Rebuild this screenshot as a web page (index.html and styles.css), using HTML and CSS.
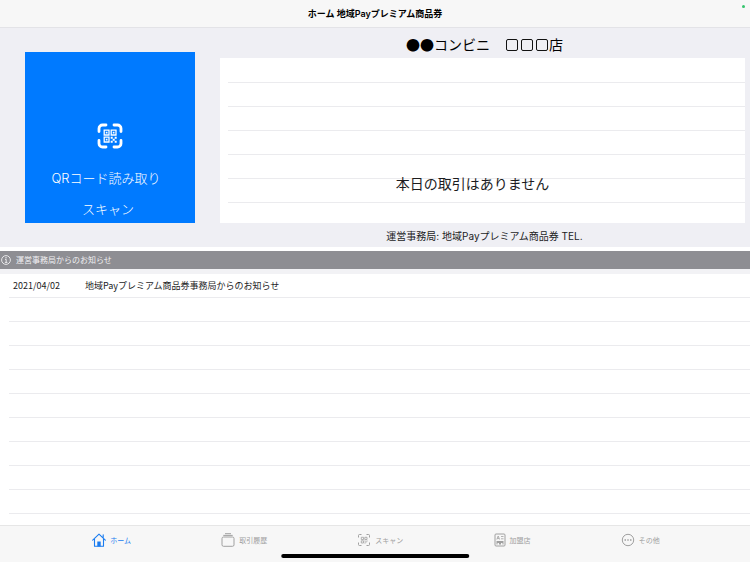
FILE: index.html
```html
<!DOCTYPE html>
<html lang="ja">
<head>
<meta charset="utf-8">
<meta name="viewport" content="width=device-width, initial-scale=1">
<title>ホーム 地域Payプレミアム商品券</title>
<link rel="stylesheet" href="styles.css">
</head>
<body>
<header class="navbar">
  <h1 class="navbar-title">ホーム 地域Payプレミアム商品券</h1>
  <span class="status-dot"></span>
</header>

<main class="content">
  <section class="summary">
    <button class="scan-button" type="button">
      <svg class="scan-icon" viewBox="0 0 26 26" fill="none" stroke="currentColor">
        <path d="M2 8.500V5.500A3.500 3.500 0 0 1 5.500 2H9M17 2h3.500A3.500 3.500 0 0 1 24 5.500v3M24 17.500v3a3.500 3.500 0 0 1-3.500 3.500H17M9 24H5.500A3.500 3.500 0 0 1 2 20.500v-3" stroke-width="2.800" stroke-linecap="round"/>
        <path d="M7.200 7.200H12V12H7.200zM14.200 7.200H19V12h-4.800zM7.200 14.200H12V19H7.200z" stroke-width="1.300"/>
        <path d="M8.800 8.800h1.700v1.700H8.800zM15.800 8.800h1.700v1.700h-1.700zM8.800 15.800h1.700v1.700H8.800zM13.700 13.700h2v2h-2zM17.700 13.700h2v2h-2zM15.700 15.700h2v2h-2zM13.700 17.700h2v2h-2zM17.700 17.700h2v2h-2z" fill="currentColor" stroke="none"/>
      </svg>
      <span class="scan-text">QRコード読み取り</span>
      <span class="scan-text">スキャン</span>
    </button>
    <div class="store">
      <h2 class="store-name"><span class="discs">●●</span>コンビニ　<span class="tofu"></span><span class="tofu"></span><span class="tofu"></span>店</h2>
      <div class="panel">
        <ul class="rows">
          <li></li><li></li><li></li><li></li><li></li><li></li>
        </ul>
        <p class="panel-message">本日の取引はありません</p>
      </div>
      <p class="contact">運営事務局: 地域Payプレミアム商品券 TEL.</p>
    </div>
  </section>

  <section class="notices">
    <h2 class="notices-title">
      <svg class="info-icon" viewBox="0 0 10 10" fill="none" stroke="currentColor">
        <circle cx="5" cy="5" r="4.400" stroke-width="0.900"/>
        <path d="M4 4.400h1.200v3M3.900 7.400h2.500" stroke-width="0.900"/>
        <circle cx="5" cy="2.700" r="0.700" fill="currentColor" stroke="none"/>
      </svg>
      運営事務局からのお知らせ
    </h2>
    <ul class="rows notice-rows">
      <li><time class="notice-date" datetime="2021-04-02">2021/04/02</time><span>地域Payプレミアム商品券事務局からのお知らせ</span></li>
      <li></li><li></li><li></li><li></li><li></li><li></li><li></li><li></li><li></li>
    </ul>
  </section>
</main>

<nav class="tabbar">
  <a class="tab tab-active" href="#home">
    <svg class="tab-icon" viewBox="0 0 14 14" fill="none" stroke="currentColor">
      <path d="M.7 7.200 7 1.200l6.300 6M2.500 6v7.200h9V6M11.200 4.500V1.800" stroke-width="1.100" stroke-linejoin="round" stroke-linecap="round"/>
      <path d="M5.300 8.500h3.400v5H5.300z" fill="currentColor" stroke="none"/>
    </svg>
    ホーム
  </a>
  <a class="tab" href="#history">
    <svg class="tab-icon" viewBox="0 0 14 14" fill="none" stroke="currentColor">
      <rect x="1" y="4" width="12" height="9.300" rx="1.500"/>
      <path d="M2.300 2.400h9.400M4 .7h6"/>
    </svg>
    取引履歴
  </a>
  <a class="tab" href="#scan">
    <svg class="tab-icon" viewBox="0 0 14 14" fill="none" stroke="currentColor">
      <path d="M1.500 4.500v-2q0-1 1-1h2M9.500 1.500h2q1 0 1 1v2M12.500 9.500v2q0 1-1 1h-2M4.500 12.500h-2q-1 0-1-1v-2"/>
      <path d="M4.300 4.300h2.200v2.200H4.300zM7.800 4.300H10v2.200H7.800zM4.300 7.800h2.200V10H4.300z" stroke-width=".8"/>
      <path d="M7.500 7.500h1v1h-1zM9.500 7.500h1v1h-1zM8.500 8.500h1v1h-1zM7.500 9.500h1v1h-1z" fill="currentColor" stroke="none"/>
    </svg>
    スキャン
  </a>
  <a class="tab" href="#stores">
    <svg class="tab-icon tab-icon-narrow" viewBox="0 0 12 14" fill="none" stroke="currentColor">
      <rect x="1" y="1" width="10" height="12" rx="1"/>
      <path d="M2.800 6.500 4.200 3l1.400 3.500M3.300 5.400h1.800M7 3.500h2.500M7 5.800h2.500" stroke-width=".8"/>
      <path d="M2.500 8h7v3.500h-1V10H7v1.500H5V10H3.500v1.500h-1z" fill="currentColor" stroke="none"/>
    </svg>
    加盟店
  </a>
  <a class="tab" href="#other">
    <svg class="tab-icon" viewBox="0 0 14 14" fill="none" stroke="currentColor">
      <circle cx="7" cy="7" r="5.700"/>
      <path d="M3.500 6.300H5v1.400H3.500zM6.300 6.300h1.400v1.400H6.300zM9 6.300h1.500v1.400H9z" fill="currentColor" stroke="none"/>
    </svg>
    その他
  </a>
  <span class="home-indicator"></span>
</nav>
</body>
</html>
```

FILE: styles.css
```css
* {
  box-sizing: border-box;
}

body {
  margin: 0;
  min-height: 100vh;
  display: flex;
  flex-direction: column;
  background: #fff;
  color: #1c1c1e;
  font-family: Inter, "Noto Sans CJK JP", sans-serif;
}

h1, h2, p, ul {
  margin: 0;
  padding: 0;
  font-weight: 400;
}

.navbar {
  position: relative;
  height: 28px;
  border-bottom: 1px solid #e3e3e7;
  background: #f7f7f7;
}

.navbar-title {
  color: #000;
  font-size: 9px;
  font-weight: 600;
  line-height: 28px;
  text-align: center;
}

.status-dot {
  position: absolute;
  top: 5px;
  right: 5px;
  width: 3px;
  height: 3px;
  border-radius: 50%;
  background: #34c46c;
}

.content {
  flex: 1;
}

.summary {
  display: flex;
  align-items: flex-start;
  gap: 25px;
  padding: 0 5px 0 25px;
  background: #efeff4;
}

.scan-button {
  display: flex;
  flex-direction: column;
  align-items: center;
  justify-content: flex-end;
  width: 170px;
  height: 171px;
  margin: 24px 0;
  padding: 0 0 4px;
  border: 0;
  background: #007aff;
  color: #fff;
  font: inherit;
}

.scan-icon {
  width: 26px;
  height: 26px;
  margin-bottom: 14px;
}

.scan-text {
  padding-right: 8px;
  font-size: 13px;
  font-weight: 300;
  line-height: 31px;
}

.scan-text:last-child {
  padding-right: 4px;
  line-height: 20px;
  margin-top: 5px;
}

.store {
  flex: 1;
}

.store-name {
  height: 30px;
  padding-left: 4px;
  color: #000;
  font-size: 14px;
  line-height: 32px;
  text-align: center;
}

.discs {
  font-family: "Noto Sans CJK JP", sans-serif;
  font-size: 14px;
}

.tofu {
  display: inline-block;
  width: 12px;
  height: 12px;
  margin: 0 1px 0 2px;
  border: 1px solid #111;
  border-radius: 2px;
  vertical-align: -1px;
}

.panel {
  position: relative;
  height: 165px;
  padding-left: 8px;
  background: #fff;
}

.rows {
  list-style: none;
}

.rows li {
  display: flex;
  height: 24px;
  border-bottom: 1px solid #ebebee;
}

.panel .rows {
  padding-top: 1px;
}

.panel-message {
  position: absolute;
  top: 114px;
  left: 0;
  right: 20px;
  font-size: 14px;
  line-height: 24px;
  text-align: center;
}

.contact {
  height: 24px;
  padding-left: 4px;
  font-size: 10px;
  line-height: 26px;
  text-align: center;
}

.notices {
  padding-top: 4px;
}

.notices-title {
  display: flex;
  align-items: center;
  gap: 5px;
  height: 18px;
  padding: 0 0 1px 1px;
  background: #8e8e93;
  color: #f0f0f2;
  font-size: 8px;
}

.info-icon {
  width: 10px;
  height: 10px;
}

.notice-rows {
  padding-left: 9px;
  border-top: 5px solid #f2f2f5;
}

.notice-rows li {
  padding-left: 4px;
  font-family: "Noto Sans CJK JP", sans-serif;
  font-size: 9px;
  line-height: 24px;
}

.notice-date {
  width: 72px;
}

.tabbar {
  position: relative;
  display: flex;
  justify-content: space-evenly;
  height: 37px;
  padding: 0 0 8px 2px;
  border-top: 1px solid #e6e6e6;
  background: #f7f7f7;
}

.tab {
  display: flex;
  align-items: center;
  gap: 4px;
  color: #a0a0a0;
  font-size: 7px;
  text-decoration: none;
}

.tab-active {
  color: #1a7cf0;
}

.tab-icon {
  width: 14px;
  height: 14px;
}

.tab-icon-narrow {
  width: 12px;
}

.home-indicator {
  position: absolute;
  bottom: 4px;
  left: 50%;
  width: 25%;
  height: 4px;
  border-radius: 2px;
  background: #000;
  transform: translateX(-50%);
}
```
